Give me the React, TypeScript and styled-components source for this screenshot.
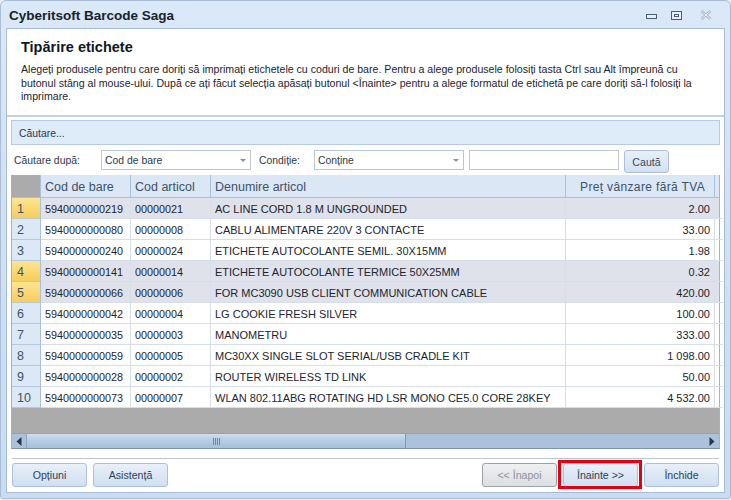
import React from "react";
import styled, { createGlobalStyle } from "styled-components";

type Row = { n: number; bar: string; code: string; name: string; price: string; selected?: boolean };

const rows: Row[] = [
  { n: 1, bar: "5940000000219", code: "00000021", name: "AC LINE CORD 1.8 M UNGROUNDED", price: "2.00", selected: true },
  { n: 2, bar: "5940000000080", code: "00000008", name: "CABLU ALIMENTARE 220V 3 CONTACTE", price: "33.00" },
  { n: 3, bar: "5940000000240", code: "00000024", name: "ETICHETE AUTOCOLANTE SEMIL. 30X15MM", price: "1.98" },
  { n: 4, bar: "5940000000141", code: "00000014", name: "ETICHETE AUTOCOLANTE TERMICE 50X25MM", price: "0.32", selected: true },
  { n: 5, bar: "5940000000066", code: "00000006", name: "FOR MC3090 USB CLIENT COMMUNICATION CABLE", price: "420.00", selected: true },
  { n: 6, bar: "5940000000042", code: "00000004", name: "LG COOKIE FRESH SILVER", price: "100.00" },
  { n: 7, bar: "5940000000035", code: "00000003", name: "MANOMETRU", price: "333.00" },
  { n: 8, bar: "5940000000059", code: "00000005", name: "MC30XX SINGLE SLOT SERIAL/USB CRADLE KIT", price: "1 098.00" },
  { n: 9, bar: "5940000000028", code: "00000002", name: "ROUTER WIRELESS TD LINK", price: "50.00" },
  { n: 10, bar: "5940000000073", code: "00000007", name: "WLAN 802.11ABG ROTATING HD LSR MONO CE5.0 CORE 28KEY", price: "4 532.00" },
];

const GlobalStyle = createGlobalStyle`
  *, *::before, *::after { box-sizing: border-box; }
  html, body { margin: 0; padding: 0; background: #e9f0f8; }
  body { font-family: "Liberation Sans", Arial, sans-serif; font-size: 11px; color: #1e2a38; }
`;

const Win = styled.div`
  width: 731px;
  height: 499px;
  background: linear-gradient(#dbe8f7, #cddff2 60%, #c9dcf1);
  border: 1px solid #a9bdd6;
  border-radius: 6px 6px 3px 3px;
  display: flex;
  flex-direction: column;
  padding: 0 5px 5px 5px;
`;

const TitleBar = styled.div`
  height: 27px;
  flex: none;
  display: flex;
  align-items: center;
  justify-content: space-between;
  padding: 2px 13px 0 3px;
  font-size: 13.5px;
  font-weight: 700;
  color: #17222e;
`;

const WinButtons = styled.div`
  height: 27px;
  margin-top: -2px;
  display: flex;
  align-items: flex-start;
`;

const WinIcon = styled.svg<{ $top: number; $left?: number }>`
  display: block;
  margin-top: ${(p) => p.$top}px;
  margin-left: ${(p) => p.$left ?? 0}px;
`;

const Client = styled.div`
  flex: 1;
  min-height: 0;
  background: #fff;
  border: 1px solid #a7bcd6;
  display: flex;
  flex-direction: column;
`;

const Intro = styled.div`
  height: 88px;
  flex: none;
  border-bottom: 2px solid #c2d2e4;
  padding: 10px 8px 0 14px;
`;

const Heading = styled.div`
  font-size: 14.5px;
  font-weight: 700;
  color: #0f1720;
  line-height: 17px;
  margin-bottom: 7px;
`;

const Text = styled.p`
  margin: 0;
  font-size: 10.6px;
  line-height: 13.5px;
  color: #1c242e;
  white-space: nowrap;
`;

const Body = styled.div`
  flex: 1;
  min-height: 0;
  display: flex;
  flex-direction: column;
  padding: 3px 4px 0 4px;
`;

const SearchBar = styled.div`
  height: 25px;
  flex: none;
  background: #deebf9;
  border: 1px solid #b6cbe3;
  padding: 1px 0 0 7px;
  display: flex;
  align-items: center;
  font-size: 10.4px;
  color: #2c3a4a;
`;

const Filters = styled.div`
  height: 30px;
  flex: none;
  display: flex;
  align-items: flex-start;
  padding: 5px 0 0 3px;
`;

const FilterLabel = styled.span<{ $w: number; $pad?: number }>`
  width: ${(p) => p.$w}px;
  height: 20px;
  flex: none;
  padding-left: ${(p) => p.$pad ?? 0}px;
  display: flex;
  align-items: center;
  font-size: 10.4px;
  color: #2c3a4a;
`;

const Combo = styled.div<{ $w: number }>`
  width: ${(p) => p.$w}px;
  height: 20px;
  flex: none;
  border: 1px solid #b9c6d6;
  background: #fff;
  padding: 0 3px;
  display: flex;
  align-items: center;
  justify-content: space-between;
  font-size: 10.4px;
  color: #2c3a4a;
`;

const Caret = styled.i`
  width: 0;
  height: 0;
  margin-right: 1px;
  border-left: 3px solid transparent;
  border-right: 3px solid transparent;
  border-top: 3px solid #8a949f;
`;

const Input = styled.div`
  width: 150px;
  height: 20px;
  flex: none;
  margin-left: 5px;
  border: 1px solid #b9c6d6;
  background: #fff;
`;

const SmallButton = styled.div`
  width: 45px;
  height: 23px;
  flex: none;
  margin-left: 5px;
  border: 1px solid #adc0d6;
  border-radius: 3px;
  background: linear-gradient(#e8f0f9, #d2e1f2);
  display: flex;
  align-items: center;
  justify-content: center;
  font-size: 10.6px;
  color: #3a4a5c;
`;

const Grid = styled.div`
  height: 274px;
  flex: none;
  border: 1px solid #a3b3c6;
  border-top: 0;
  border-bottom-color: #7f95ad;
  background: #ababab;
  display: flex;
  flex-direction: column;
`;

const cols = "29px 90px 80px 355px 149px 1fr";

const HeadRow = styled.div`
  height: 23px;
  flex: none;
  display: grid;
  grid-template-columns: ${cols};
  background: #dbe7f5;
  border-bottom: 1px solid #a9c0da;
`;

const HeadCell = styled.div<{ $corner?: boolean; $right?: boolean; $last?: boolean }>`
  padding: 1px ${(p) => (p.$right ? 9 : 5)}px 0 4px;
  display: flex;
  align-items: center;
  justify-content: ${(p) => (p.$right ? "flex-end" : "flex-start")};
  font-size: ${(p) => (p.$right ? 12 : 12.5)}px;
  letter-spacing: ${(p) => (p.$right ? "0.35px" : "0")};
  color: #3d5269;
  white-space: nowrap;
  border-right: ${(p) => (p.$last ? "0" : "1px solid #a9c0da")};
  background: ${(p) => (p.$corner ? "#ababab" : "transparent")};
`;

const DataRow = styled.div<{ $selected?: boolean }>`
  height: 21px;
  flex: none;
  display: grid;
  grid-template-columns: ${cols};
  background: ${(p) => (p.$selected ? "#dfe2ea" : "#fff")};
`;

const RowHead = styled.div<{ $selected?: boolean }>`
  padding: 1px 0 0 5px;
  display: flex;
  align-items: center;
  font-size: 12.5px;
  color: #3d5269;
  background: ${(p) => (p.$selected ? "linear-gradient(#fde58f, #f8cc5c)" : "#dce8f6")};
  border-right: 1px solid #a9c0da;
  border-bottom: 1px solid #b4c8de;
`;

const Cell = styled.div<{ $right?: boolean; $last?: boolean }>`
  padding: 1px 4px 0;
  display: flex;
  align-items: center;
  justify-content: ${(p) => (p.$right ? "flex-end" : "flex-start")};
  font-size: 11px;
  color: #1c242e;
  white-space: nowrap;
  overflow: hidden;
  border-right: ${(p) => (p.$last ? "0" : "1px solid #d6dfe9")};
  border-bottom: 1px solid #d6dfe9;
`;

const NumCell = styled(Cell)`
  font-size: 10.8px;
`;

const Filler = styled.div`
  flex: 1;
`;

const ScrollBar = styled.div`
  height: 15px;
  flex: none;
  display: flex;
  align-items: center;
  background: #abc2dc;
  border-top: 1px solid #8ba4c0;
`;

const ScrollEnd = styled.div`
  width: 14px;
  height: 100%;
  flex: none;
  display: flex;
  align-items: center;
  justify-content: center;
`;

const Thumb = styled.div`
  width: 380px;
  height: 100%;
  flex: none;
  background: linear-gradient(#cfdfef, #b6cde5 45%, #a5c0dc);
  border-left: 1px solid #8ba4c0;
  border-right: 1px solid #7f98b5;
  display: flex;
  align-items: center;
  justify-content: center;
`;

const Grip = styled.span`
  width: 7px;
  height: 7px;
  background: repeating-linear-gradient(90deg, #6e86a2 0 1px, transparent 1px 2px);
`;

const Footer = styled.div`
  flex: 1;
  min-height: 0;
  display: flex;
  flex-direction: column;
  padding: 0 1px;
`;

const Rule = styled.div`
  height: 1px;
  flex: none;
  margin-top: 9px;
  background: #c0c6cd;
`;

const ButtonRow = styled.div`
  display: flex;
  align-items: center;
  gap: 6px;
  margin-top: 4px;
`;

const Spacer = styled.div`
  flex: 1;
`;

const Btn = styled.div<{ $disabled?: boolean }>`
  width: 75px;
  height: 24px;
  flex: none;
  border: 1px solid ${(p) => (p.$disabled ? "#9aa3ac" : "#adc0d6")};
  border-radius: 3px;
  background: ${(p) =>
    p.$disabled ? "linear-gradient(#eef0f2, #dcdfe2)" : "linear-gradient(#e8f0f9, #d0dff1)"};
  display: flex;
  align-items: center;
  justify-content: center;
  font-size: 10.6px;
  color: ${(p) => (p.$disabled ? "#8d949b" : "#2f4258")};
`;

// red annotation drawn over the screenshot, around the next button
const Marked = styled(Btn)`
  position: relative;

  &::after {
    content: "";
    position: absolute;
    inset: -4px -5px -3px -6px;
    border: 3px solid #e6000f;
  }
`;

const Minimize = () => (
  <WinIcon $top={13} width="11" height="5" viewBox="0 0 11 5">
    <rect x="0.5" y="0.5" width="10" height="4" fill="#e6eff9" stroke="#4d5e72" />
  </WinIcon>
);

const Restore = () => (
  <WinIcon $top={10} $left={14} width="11" height="9" viewBox="0 0 11 9">
    <rect x="0.5" y="0.5" width="10" height="8" fill="#e6eff9" stroke="#4d5e72" />
    <rect x="3.5" y="3.5" width="4" height="2" fill="none" stroke="#4d5e72" />
  </WinIcon>
);

const Close = () => (
  <WinIcon $top={9} $left={18} width="12" height="10" viewBox="0 0 12 10">
    <path d="M1.5 1 L10.5 9 M10.5 1 L1.5 9" stroke="#a9b6c4" strokeWidth="2.6" />
    <path d="M1.5 1 L10.5 9 M10.5 1 L1.5 9" stroke="#eef3f9" strokeWidth="1" />
  </WinIcon>
);

const ArrowLeft = () => (
  <svg width="6" height="9" viewBox="0 0 6 9">
    <path d="M5.5 0 V9 L0.5 4.5 Z" fill="#2a3644" />
  </svg>
);

const ArrowRight = () => (
  <svg width="6" height="9" viewBox="0 0 6 9">
    <path d="M0.5 0 V9 L5.5 4.5 Z" fill="#2a3644" />
  </svg>
);

export default function App() {
  return (
    <>
      <GlobalStyle />
      <Win>
        <TitleBar>
          <span>Cyberitsoft Barcode Saga</span>
          <WinButtons>
            <Minimize />
            <Restore />
            <Close />
          </WinButtons>
        </TitleBar>
        <Client>
          <Intro>
            <Heading>Tipărire etichete</Heading>
            <Text>
              Alegeți produsele pentru care doriți să imprimați etichetele cu coduri de bare. Pentru a alege produsele folosiți tasta Ctrl sau Alt împreună cu
              <br />
              butonul stâng al mouse-ului. După ce ați făcut selecția apăsați butonul &lt;Înainte&gt; pentru a alege formatul de etichetă pe care doriți să-l folosiți la
              <br />
              imprimare.
            </Text>
          </Intro>
          <Body>
            <SearchBar>Căutare...</SearchBar>
            <Filters>
              <FilterLabel $w={87}>Căutare după:</FilterLabel>
              <Combo $w={150}>
                Cod de bare
                <Caret />
              </Combo>
              <FilterLabel $w={63} $pad={8}>Condiție:</FilterLabel>
              <Combo $w={150}>
                Conține
                <Caret />
              </Combo>
              <Input />
              <SmallButton>Caută</SmallButton>
            </Filters>
            <Grid>
              <HeadRow>
                <HeadCell $corner />
                <HeadCell>Cod de bare</HeadCell>
                <HeadCell>Cod articol</HeadCell>
                <HeadCell>Denumire articol</HeadCell>
                <HeadCell $right>Preț vânzare fără TVA</HeadCell>
                <HeadCell $last />
              </HeadRow>
              {rows.map((r) => (
                <DataRow key={r.n} $selected={r.selected}>
                  <RowHead $selected={r.selected}>{r.n}</RowHead>
                  <NumCell>{r.bar}</NumCell>
                  <NumCell>{r.code}</NumCell>
                  <Cell>{r.name}</Cell>
                  <Cell $right>{r.price}</Cell>
                  <Cell $last />
                </DataRow>
              ))}
              <Filler />
              <ScrollBar>
                <ScrollEnd>
                  <ArrowLeft />
                </ScrollEnd>
                <Thumb>
                  <Grip />
                </Thumb>
                <Spacer />
                <ScrollEnd>
                  <ArrowRight />
                </ScrollEnd>
              </ScrollBar>
            </Grid>
            <Footer>
              <Rule />
              <ButtonRow>
                <Btn>Opțiuni</Btn>
                <Btn>Asistență</Btn>
                <Spacer />
                <Btn $disabled>&lt;&lt; Înapoi</Btn>
                <Marked>Înainte &gt;&gt;</Marked>
                <Btn>Închide</Btn>
              </ButtonRow>
            </Footer>
          </Body>
        </Client>
      </Win>
    </>
  );
}
